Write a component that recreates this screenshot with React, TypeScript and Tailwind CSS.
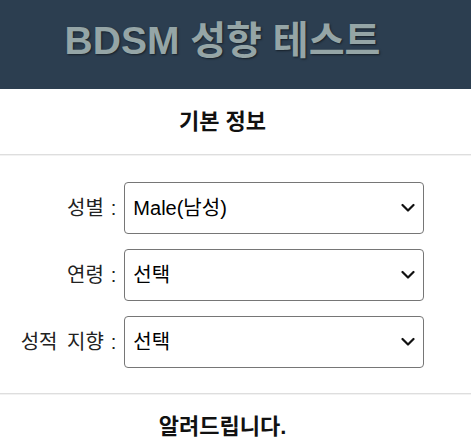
import React, { useState } from 'react';

const font = 'font-["Liberation_Sans","Noto_Sans_CJK_KR",sans-serif]';

interface FieldProps {
  label: string;
  value: string;
  options: string[];
  onChange: (v: string) => void;
}

const Chevron = () => (
  <svg width="14" height="9" viewBox="0 0 14 9" className="pointer-events-none absolute right-[9px] top-1/2 -translate-y-1/2">
    <path d="M1.5 1.5 L7 7 L12.5 1.5" fill="none" stroke="#111" strokeWidth="2.2" strokeLinecap="round" strokeLinejoin="round" />
  </svg>
);

const Field: React.FC<FieldProps> = ({ label, value, options, onChange }) => (
  <>
    <label className="self-center whitespace-nowrap text-right text-[20px] text-[#222]">
      <span className="[word-spacing:4px]">{label}</span>
      <span className="ml-[7px]">:</span>
    </label>
    <div className="relative">
      <select
        value={value}
        onChange={(e) => onChange(e.target.value)}
        className="h-[52px] w-[300px] appearance-none rounded-[4px] border border-[#767676] bg-white pl-[8px] text-[20px] text-black outline-none"
      >
        {options.map((o) => (
          <option key={o} value={o}>{o}</option>
        ))}
      </select>
      <Chevron />
    </div>
  </>
);

export default function App() {
  const [gender, setGender] = useState('Male(남성)');
  const [age, setAge] = useState('선택');
  const [orientation, setOrientation] = useState('선택');

  return (
    <div className={`${font} min-h-[447px] w-[471px] bg-white`}>
      <header className="flex h-[89px] items-center bg-[#2c3e50]">
        <h1 className="w-[445px] pb-[6px] text-center text-[39px] font-bold text-[#95a5a6] [text-shadow:1px_1px_2px_rgba(0,0,0,0.5)]">
          BDSM 성향 테스트
        </h1>
      </header>
      <h2 className="flex h-[65px] w-[445px] items-center justify-center text-[22px] font-bold text-[#111]">기본 정보</h2>
      <hr className="border-0 border-t border-b border-t-[#dedede] border-b-[#f2f2f2]" />
      <div className="w-[445px] pb-[25px] pt-[26px]">
        <div className="mx-auto grid w-fit grid-cols-[auto_300px] gap-x-[8px] gap-y-[15px]">
          <Field label="성별" value={gender} options={['Male(남성)', 'Female(여성)']} onChange={setGender} />
          <Field label="연령" value={age} options={['선택', '10대', '20대', '30대', '40대 이상']} onChange={setAge} />
          <Field label="성적 지향" value={orientation} options={['선택', '이성애', '동성애', '양성애']} onChange={setOrientation} />
        </div>
      </div>
      <hr className="border-0 border-t border-b border-t-[#dedede] border-b-[#f2f2f2]" />
      <h2 className="flex h-[62px] w-[445px] items-center justify-center text-[22px] font-bold text-[#111]">알려드립니다.</h2>
    </div>
  );
}
